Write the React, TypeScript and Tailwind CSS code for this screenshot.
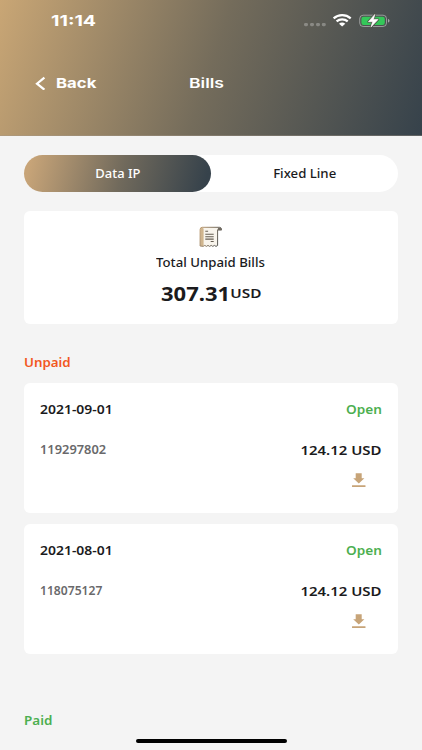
import React from 'react';

const bills = [
  { date: '2021-09-01', number: '119297802', amount: '124.12 USD', numberScale: 'scale-x-[1.07]' },
  { date: '2021-08-01', number: '118075127', amount: '124.12 USD', numberScale: 'scale-x-[1.01]' },
];

function StatusIcons() {
  return (
    <svg className="absolute left-[303px] top-[13px]" width="88" height="16" viewBox="0 0 88 16" fill="none">
      <g fill="#fff" opacity="0.28">
        <rect x="1" y="10" width="4" height="3.2" rx="1.4" />
        <rect x="7" y="10" width="4" height="3.2" rx="1.4" />
        <rect x="13" y="10" width="4" height="3.2" rx="1.4" />
        <rect x="18.8" y="10" width="4" height="3.2" rx="1.4" />
      </g>
      <g stroke="#fff" strokeWidth="2.2">
        <path d="M30.6 5.4C35.4 1.100 42.8 1.100 47.7 5.4" />
        <path d="M33.6 8.4C36.7 5.6 41.6 5.6 44.7 8.4" />
      </g>
      <path d="M36 10.7C37.7 9.200 40.6 9.200 42.3 10.7L39.15 13.4Z" fill="#fff" />
      <rect x="56.7" y="2.200" width="26.8" height="11.3" rx="3.5" stroke="#fff" strokeOpacity="0.42" />
      <rect x="58.4" y="3.800" width="23.4" height="8.1" rx="2.2" fill="#34c759" />
      <path d="M85 6v3.6c1.2-.3 1.5-1 1.5-1.8S86.200 6.300 85 6Z" fill="#fff" opacity="0.5" />
      <path d="M71.800 1.400L65.400 8.700H69.700L67.900 14.100L75.100 6.500H70.500Z" fill="#fff" stroke="#4d5046" strokeWidth="2.2" strokeLinejoin="round" />
      <path d="M71.800 1.400L65.400 8.700H69.700L67.900 14.100L75.100 6.500H70.500Z" fill="#fff" stroke="#fff" strokeWidth="0.6" />
    </svg>
  );
}

function ReceiptIcon() {
  return (
    <svg width="24" height="22" viewBox="0 0 24 22" fill="none">
      <defs>
        <linearGradient id="receipt" x1="0" y1="0" x2="24" y2="8" gradientUnits="userSpaceOnUse">
          <stop stopColor="#c7a478" />
          <stop offset="1" stopColor="#4d5050" />
        </linearGradient>
      </defs>
      <path d="M2.500 1.200H19V19.500L17.400 20.300L15.800 19.300L14.200 20.300L12.600 19.300L11 20.300L9.400 19.300L7.800 20.300L6.200 19.300L4.600 20.300L1 19.300V3.500Q1 1.200 2.500 1.200Z" fill="#f8f4ec" />
      <path d="M1.200 20V3.800Q1.200 1.500 3.200 1.500Q4.600 1.500 4.600 3.500V20Z" fill="#d0b58e" />
      <path d="M3.200 1.300H20.500Q22.500 1.300 22.500 3.900H18.600V19.500L17 20.400L15.400 19.400L13.800 20.400L12.200 19.400L10.600 20.400L9 19.400L7.400 20.400L5.800 19.400L4.200 20.400L1.100 20V3.600Q1.100 1.300 3.200 1.300Z" stroke="url(#receipt)" strokeWidth="1" />
      <path d="M18.500 4.200Q18.500 1.800 20.400 1.500Q22.700 1.500 22.700 4.200Z" fill="#706a60" />
      <path d="M6.300 5.300H9.100M6.300 8.300H14.700M6.300 10.700H14.700M6.300 13.100H14.700M11.700 15.500H14.700" stroke="#655d52" strokeWidth="1.100" />
    </svg>
  );
}

function DownloadIcon() {
  return (
    <svg className="mt-[13px] mr-4" width="14" height="15" viewBox="0 0 14 15" fill="#c7a478">
      <path d="M3.700 0.300H9.700V5.200H12.400L6.800 10.500L1.200 5.200H3.700Z" />
      <rect x="0" y="12.200" width="13.500" height="1.800" rx="0.300" />
    </svg>
  );
}

export default function App() {
  return (
    <div className="relative flex h-[750px] w-[422px] flex-col overflow-hidden bg-[#f4f4f4] font-['Noto_Sans','Open_Sans',sans-serif] text-[#1b1b1d]">
      <header className="h-[136px] shrink-0 border-b border-[#8b8881]/40 bg-[linear-gradient(108deg,#c9a675_0%,#746c5b_50%,#36424b_100%)] text-white">
        <div className="h-[42px] pt-[11px] pl-[51px] font-['Inter',sans-serif] text-[14.5px] leading-5 font-bold">
          <span className="inline-block origin-left scale-x-[1.35]">11:14</span>
          <StatusIcons />
        </div>
        <div className="grid grid-cols-[189px_1fr] pt-[31px] font-['Inter',sans-serif] text-[13.500px] leading-5">
          <div className="flex items-center pl-[35px]">
            <svg width="11" height="14" viewBox="0 0 11 14" fill="none" stroke="white" strokeWidth="2.200">
              <path d="M9.400 1.600L2 7.700L9.400 13.700" />
            </svg>
            <span className="ml-[10px] origin-left scale-x-[1.24] font-bold">Back</span>
          </div>
          <span className="origin-left justify-self-start scale-x-[1.3] font-semibold">Bills</span>
        </div>
      </header>

      <main className="flex flex-col px-6 pt-[19px]">
        <div className="grid h-[37px] grid-cols-2 rounded-full bg-white text-[12px] font-medium">
          <div className="grid place-items-center rounded-full bg-[linear-gradient(104deg,#c7a478_4%,#716a5c_52%,#36424b_96%)] pt-px text-white">
            <span className="scale-x-[1.08]">Data IP</span>
          </div>
          <div className="grid place-items-center pt-px">
            <span className="scale-x-[1.1]">Fixed Line</span>
          </div>
        </div>

        <section className="mt-[19px] flex h-[113px] flex-col items-center rounded-[6px] bg-white pt-[15px]">
          <ReceiptIcon />
          <p className="mt-[5px] mr-px scale-x-[1.1] text-[12px] leading-5 font-medium">Total Unpaid Bills</p>
          <div className="mt-[7px] flex h-7 w-[100px] items-center justify-between">
            <span className="origin-left scale-x-[1.1] text-[20px] font-bold">307.31</span>
            <span className="origin-right scale-x-[1.18] text-[13px] font-semibold">USD</span>
          </div>
        </section>

        <h2 className="mt-[29px] h-5 origin-left scale-x-[1.11] self-start text-[12px] leading-5 font-semibold text-[#f2581f]">Unpaid</h2>
        <div className="mt-[10px] flex flex-col gap-[11px]">
          {bills.map((bill) => (
            <article key={bill.date} className="h-[130px] rounded-[6px] bg-white px-4 pt-[17px] leading-5">
              <div className="flex justify-between text-[12.500px] font-semibold">
                <span className="origin-left scale-x-[1.115]">{bill.date}</span>
                <span className="origin-right scale-x-[1.09] text-[#4caf50]">Open</span>
              </div>
              <div className="mt-5 flex justify-between font-semibold">
                <span className={`origin-left text-[12px] text-[#69696b] ${bill.numberScale}`}>{bill.number}</span>
                <span className="origin-right scale-x-[1.15] text-[13px]">{bill.amount}</span>
              </div>
              <div className="flex justify-end leading-none">
                <DownloadIcon />
              </div>
            </article>
          ))}
        </div>
        <h2 className="mt-[57px] origin-left scale-x-[1.12] self-start text-[12px] leading-5 font-semibold text-[#4caf50]">Paid</h2>
      </main>
      <div className="absolute bottom-[7px] left-[136px] h-1 w-[151px] rounded-full bg-black" />
    </div>
  );
}
